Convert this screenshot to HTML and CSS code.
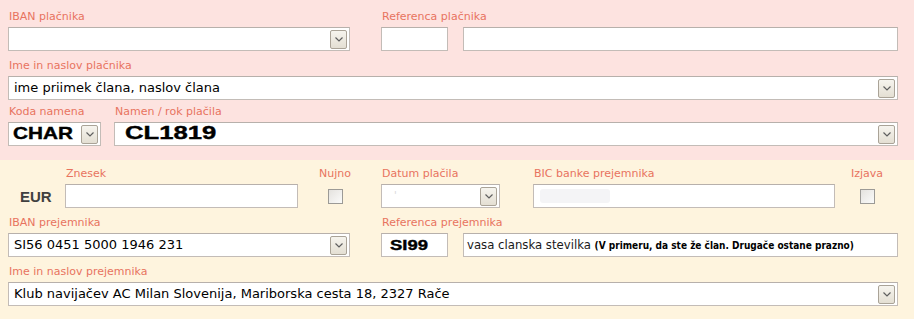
FILE: index.html
```html
<!DOCTYPE html>
<html lang="sl">
<head>
<meta charset="utf-8">
<title>UPN</title>
<link rel="stylesheet" href="styles.css">
</head>
<body>
<div class="form">
  <section class="sec payer">
    <div class="row r1">
      <div class="cell c-iban">
        <div class="lbl">IBAN plačnika</div>
        <div class="field sel"><span class="val"></span><span class="dd"><svg viewBox="0 0 8 5" width="8" height="5"><polyline points="0.5,0.5 4,4 7.5,0.5"/></svg></span></div>
      </div>
      <div class="cell c-ref1">
        <div class="lbl">Referenca plačnika</div>
        <div class="field"></div>
      </div>
      <div class="cell c-ref2">
        <div class="lbl"></div>
        <div class="field"></div>
      </div>
    </div>
    <div class="row r2">
      <div class="cell c-full">
        <div class="lbl">Ime in naslov plačnika</div>
        <div class="field sel"><span class="val">ime priimek člana, naslov člana</span><span class="dd"><svg viewBox="0 0 8 5" width="8" height="5"><polyline points="0.5,0.5 4,4 7.5,0.5"/></svg></span></div>
      </div>
    </div>
    <div class="row r3">
      <div class="cell c-koda">
        <div class="lbl">Koda namena</div>
        <div class="field sel"><span class="val"><span class="big char">CHAR</span></span><span class="dd"><svg viewBox="0 0 8 5" width="8" height="5"><polyline points="0.5,0.5 4,4 7.5,0.5"/></svg></span></div>
      </div>
      <div class="cell c-namen">
        <div class="lbl">Namen / rok plačila</div>
        <div class="field sel"><span class="val"><span class="big cl">CL1819</span></span><span class="dd"><svg viewBox="0 0 8 5" width="8" height="5"><polyline points="0.5,0.5 4,4 7.5,0.5"/></svg></span></div>
      </div>
    </div>
  </section>

  <section class="sec payee">
    <div class="row r4">
      <div class="cell c-eur">
        <div class="lbl"></div>
        <div class="eur">EUR</div>
      </div>
      <div class="cell c-znesek">
        <div class="lbl">Znesek</div>
        <div class="field"></div>
      </div>
      <div class="cell c-nujno">
        <div class="lbl">Nujno</div>
        <div class="chk-wrap"><span class="chk"></span></div>
      </div>
      <div class="cell c-datum">
        <div class="lbl">Datum plačila</div>
        <div class="field sel"><span class="val faint">'</span><span class="dd"><svg viewBox="0 0 8 5" width="8" height="5"><polyline points="0.5,0.5 4,4 7.5,0.5"/></svg></span></div>
      </div>
      <div class="cell c-bic">
        <div class="lbl">BIC banke prejemnika</div>
        <div class="field"><span class="blur"></span></div>
      </div>
      <div class="cell c-izjava">
        <div class="lbl">Izjava</div>
        <div class="chk-wrap"><span class="chk"></span></div>
      </div>
    </div>
    <div class="row r5">
      <div class="cell c-iban">
        <div class="lbl">IBAN prejemnika</div>
        <div class="field sel"><span class="val">SI56 0451 5000 1946 231</span><span class="dd"><svg viewBox="0 0 8 5" width="8" height="5"><polyline points="0.5,0.5 4,4 7.5,0.5"/></svg></span></div>
      </div>
      <div class="cell c-ref1">
        <div class="lbl">Referenca prejemnika</div>
        <div class="field"><span class="val"><span class="big si">SI99</span></span></div>
      </div>
      <div class="cell c-ref2">
        <div class="lbl"></div>
        <div class="field"><span class="val vasa">vasa clanska stevilka <b class="note">(V primeru, da ste že član. Drugače ostane prazno)</b></span></div>
      </div>
    </div>
    <div class="row r6">
      <div class="cell c-full">
        <div class="lbl">Ime in naslov prejemnika</div>
        <div class="field sel"><span class="val">Klub navijačev AC Milan Slovenija, Mariborska cesta 18, 2327 Rače</span><span class="dd"><svg viewBox="0 0 8 5" width="8" height="5"><polyline points="0.5,0.5 4,4 7.5,0.5"/></svg></span></div>
      </div>
    </div>
  </section>
</div>
</body>
</html>
```

FILE: styles.css
```css
* { box-sizing: border-box; }

html, body {
  margin: 0;
  padding: 0;
  background: #fef4de;
}

body {
  font-family: "DejaVu Sans", Verdana, sans-serif;
  font-size: 13px;
  color: #000;
}

.form {
  width: 914px;
  height: 319px;
  overflow: hidden;
}

.sec {
  padding: 0 16px 0 8px;
}

.payer {
  background: #fde3e0;
  height: 160px;
}

.payee {
  background: #fef4de;
  height: 159px;
}

.row {
  display: flex;
  align-items: flex-start;
}

.cell {
  display: flex;
  flex-direction: column;
}

.lbl {
  font-family: "DejaVu Sans", Verdana, sans-serif;
  font-size: 11px;
  line-height: 13px;
  color: #e8735f;
  white-space: nowrap;
  display: flex;
  align-items: flex-end;
  padding-left: 1px;
  padding-bottom: 4px;
}

.r1 .lbl { height: 27px; }
.r2 .lbl { height: 25px; }
.r3 .lbl { height: 22px; }
.r4 .lbl { height: 24px; }
.r5 .lbl { height: 25px; }
.r6 .lbl { height: 25px; }

.field {
  height: 24px;
  background: #fff;
  border: 1px solid #c3bcb7;
  border-top-color: #b7b0ab;
  display: flex;
  align-items: center;
  position: relative;
  overflow: hidden;
}

.val {
  padding-left: 5px;
  white-space: nowrap;
  flex: 1;
  line-height: 20px;
}

.dd {
  flex: none;
  width: 17px;
  height: 19px;
  margin-right: 2px;
  border: 1px solid #aaa397;
  border-radius: 2px;
  background: linear-gradient(#f6f4ee, #e4dfd3);
  display: flex;
  align-items: center;
  justify-content: center;
}

.dd svg polyline {
  fill: none;
  stroke: #5f5f5f;
  stroke-width: 1.2;
}

/* column widths */
.c-iban { width: 342px; }
.c-ref1 { width: 67px; margin-left: 31px; }
.c-ref2 { flex: 1; margin-left: 15px; }
.c-full { flex: 1; }
.c-koda { width: 93px; }
.c-namen { flex: 1; margin-left: 13px; }

.c-eur { width: 57px; }
.c-znesek { width: 233px; }
.c-nujno { width: 50px; margin-left: 12px; align-items: center; }
.c-datum { width: 119px; margin-left: 21px; }
.c-bic { width: 302px; margin-left: 33px; }
.c-izjava { width: 44px; margin-left: 10px; align-items: center; }

.c-nujno .lbl, .c-izjava .lbl { padding-left: 0; }

.eur {
  height: 24px;
  display: flex;
  align-items: center;
  padding-left: 12px;
  font-family: "Liberation Sans", Arial, sans-serif;
  font-weight: bold;
  font-size: 15px;
  color: #404040;
}

.chk-wrap {
  height: 24px;
  display: flex;
  align-items: center;
}

.chk {
  width: 15px;
  height: 15px;
  border: 1px solid #9c9a96;
  background: linear-gradient(135deg, #e4e2de, #fbfbfa);
}

.big {
  display: inline-block;
  font-family: "Liberation Sans", Arial, sans-serif;
  font-weight: bold;
  color: #000;
  transform-origin: left center;
  -webkit-text-stroke: 0.4px #000;
}

.char {
  font-size: 17px;
  transform: scaleX(1.22);
  margin-left: -1px;
}

.cl {
  font-size: 19px;
  transform: scaleX(1.35);
  margin-left: 5px;
}

.si {
  font-size: 15px;
  transform: scaleX(1.23);
  margin-left: 3px;
}

.vasa {
  font-family: "DejaVu Sans Condensed", "DejaVu Sans", sans-serif;
  font-size: 13px;
  color: #1a1a1a;
  padding-left: 3px;
}

.note {
  font-family: "DejaVu Sans Condensed", "DejaVu Sans", sans-serif;
  font-size: 10px;
  font-weight: bold;
  color: #000;
}

.faint {
  color: #d8d8d8;
  padding-left: 12px;
  font-size: 10px;
}

.blur {
  display: block;
  width: 70px;
  height: 14px;
  margin-left: 6px;
  background: #f4f4f6;
  border-radius: 3px;
}
```
